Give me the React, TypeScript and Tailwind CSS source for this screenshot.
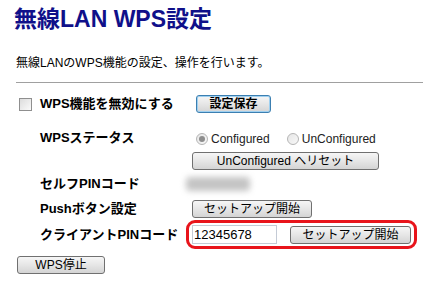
import React from 'react';

const font = { fontFamily: '"Liberation Sans", "Noto Sans CJK JP", sans-serif' };

function Btn({ children, w, focus }: { children: React.ReactNode; w: string; focus?: boolean }) {
  return (
    <button
      className={`${w} h-[18px] rounded-[3px] border ${
        focus ? 'border-[#3c7fb1] shadow-[inset_0_0_0_1px_#9fd0f0]' : 'border-[#707070]'
      } bg-gradient-to-b from-[#f6f6f6] via-[#e6e6e6] to-[#d4d4d4] text-[12px] leading-none text-black flex items-center justify-center`}
    >
      {children}
    </button>
  );
}

function Radio({ checked }: { checked?: boolean }) {
  return (
    <span className="w-[12px] h-[12px] rounded-full border border-[#b5b5b5] bg-gradient-to-br from-[#e6e6e6] to-[#f8f8f8] flex items-center justify-center">
      {checked && <span className="w-[6px] h-[6px] rounded-full bg-[#8d8d8d]" />}
    </span>
  );
}

export default function App() {
  return (
    <div className="w-[423px] h-[287px] bg-white overflow-hidden pl-[16px] text-black" style={font}>
      <h1 className="mt-[6px] -ml-[2px] text-[23px] leading-[26px] font-bold text-[#10108a]">無線LAN WPS設定</h1>
      <p className="mt-[23px] text-[12px] leading-[16px]">無線LANのWPS機能の設定、操作を行います。</p>
      <div className="mt-[11px] h-px bg-[#a0a0a0]" />

      <div className="mt-[10px] h-[22px] flex items-center text-[13px] font-bold">
        <span className="ml-[3px] w-[13px] h-[13px] border border-[#8f8f8f] bg-gradient-to-br from-[#dcdcdc] to-[#fafafa]" />
        <span className="ml-[8px] w-[156px]">WPS機能を無効にする</span>
        <Btn w="w-[75px]" focus>設定保存</Btn>
      </div>

      <div className="mt-[13px] h-[22px] flex items-center">
        <span className="ml-[24px] w-[156px] text-[13px] font-bold -mt-[3px]">WPSステータス</span>
        <div className="flex items-center text-[12px] text-[#222]">
          <Radio checked />
          <span className="ml-[3px]">Configured</span>
          <span className="ml-[17px]"><Radio /></span>
          <span className="ml-[3px]">UnConfigured</span>
        </div>
      </div>

      <div className="mt-[2px] flex">
        <span className="ml-[176px]" />
        <Btn w="w-[187px]">UnConfigured へリセット</Btn>
      </div>

      <div className="mt-[6px] h-[16px] flex items-center">
        <span className="ml-[24px] w-[146px] text-[13px] font-bold">セルフPINコード</span>
        <span className="w-[64px] h-[14px] bg-[#c4c4c4] blur-[3px] rounded" />
      </div>

      <div className="mt-[8px] h-[18px] flex items-center">
        <span className="ml-[24px] w-[152px] text-[13px] font-bold">Pushボタン設定</span>
        <Btn w="w-[120px]">セットアップ開始</Btn>
      </div>

      <div className="mt-[2px] h-[29px] flex items-center">
        <span className="ml-[24px] w-[146px] text-[13px] font-bold">クライアントPINコード</span>
        <div className="w-[231px] h-[29px] border-[3px] border-[#e8141b] rounded-[9px] flex items-center pl-[3px]">
          <div className="w-[85px] h-[19px] border border-[#c4cbd6] bg-white text-[13px] leading-none flex items-center pl-[1px]">12345678</div>
          <span className="ml-[13px]" />
          <Btn w="w-[121px]">セットアップ開始</Btn>
        </div>
      </div>

      <div className="mt-[7px] ml-[1px] flex">
        <Btn w="w-[88px]">WPS停止</Btn>
      </div>
    </div>
  );
}
